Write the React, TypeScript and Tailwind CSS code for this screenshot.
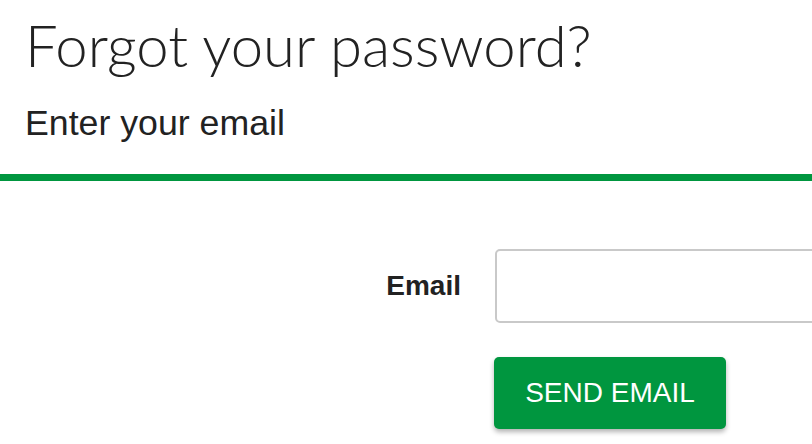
export default function App() {
  return (
    <div className="w-full min-h-screen overflow-hidden bg-white text-[#222]" style={{ fontFamily: '"Liberation Sans", Arial, sans-serif' }}>
      <div className="px-[25px] pt-[13px]">
        <h1 className="text-[58px] leading-[64px] font-light" style={{ fontFamily: 'Lato, "Liberation Sans", sans-serif' }}>
          Forgot your password?
        </h1>
        <p className="mt-[25px] text-[35.7px] leading-[42px]">Enter your email</p>
      </div>
      <div className="mt-[30px] h-[7px] w-full bg-[#00963f]" />
      <form className="mt-[68px]" onSubmit={(e) => e.preventDefault()}>
        <div className="flex items-center">
          <label htmlFor="email" className="w-[461px] shrink-0 text-right text-[28px] font-bold">
            Email
          </label>
          <input
            id="email"
            type="email"
            className="ml-[34px] h-[74px] w-[420px] shrink-0 rounded-[5px] border-2 border-[#c9c9c9] px-3 text-[24px] outline-none"
          />
        </div>
        <div className="mt-[34px] pl-[494px]">
          <button
            type="submit"
            className="h-[72px] w-[232px] rounded-[5px] bg-[#00963f] text-[28px] text-white shadow-[0_3px_5px_rgba(0,0,0,0.3)]"
          >
            SEND EMAIL
          </button>
        </div>
      </form>
    </div>
  );
}
